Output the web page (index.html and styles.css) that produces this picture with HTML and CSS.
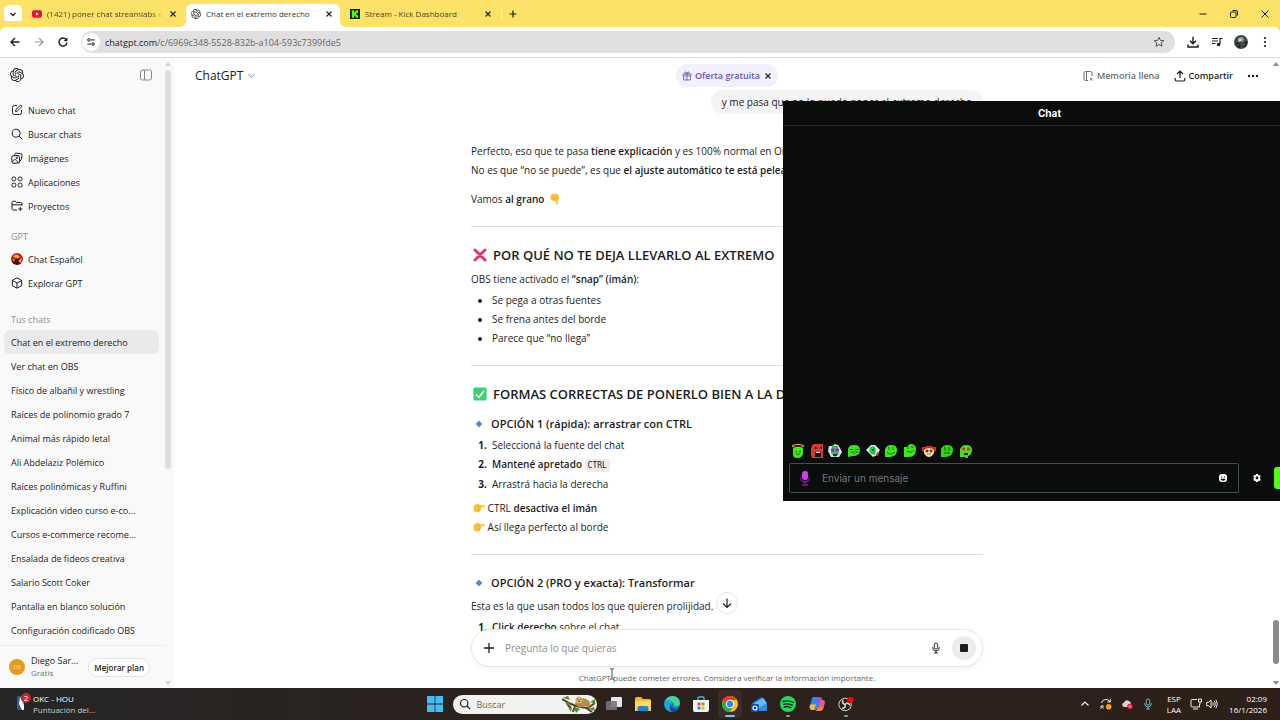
FILE: index.html
```html
<!DOCTYPE html>
<html lang="es">
<head>
  <meta charset="UTF-8">
  <meta name="viewport" content="width=device-width, initial-scale=1.0">
  <title>Chat en el extremo derecho</title>
  <link rel="stylesheet" href="styles.css">
</head>
<body>
  <svg class="defs" aria-hidden="true">
    <symbol id="openai" viewBox="0 0 24 24"><path fill="currentColor" d="M22.2819 9.8211a5.9847 5.9847 0 0 0-.5157-4.9108 6.0462 6.0462 0 0 0-6.5098-2.9A6.0651 6.0651 0 0 0 4.9807 4.1818a5.9847 5.9847 0 0 0-3.9977 2.9 6.0462 6.0462 0 0 0 .7427 7.0966 5.98 5.98 0 0 0 .511 4.9107 6.051 6.051 0 0 0 6.5146 2.9001A5.9847 5.9847 0 0 0 13.2599 24a6.0557 6.0557 0 0 0 5.7718-4.2058 5.9894 5.9894 0 0 0 3.9977-2.9001 6.0557 6.0557 0 0 0-.7475-7.0729zm-9.022 12.6081a4.4755 4.4755 0 0 1-2.8764-1.0408l.1419-.0804 4.7783-2.7582a.7948.7948 0 0 0 .3927-.6813v-6.7369l2.02 1.1686a.071.071 0 0 1 .038.052v5.5826a4.504 4.504 0 0 1-4.4945 4.4944zm-9.6607-4.1254a4.4708 4.4708 0 0 1-.5346-3.0137l.142.0852 4.783 2.7582a.7712.7712 0 0 0 .7806 0l5.8428-3.3685v2.3324a.0804.0804 0 0 1-.0332.0615L9.74 19.9502a4.4992 4.4992 0 0 1-6.1408-1.6464zM2.3408 7.8956a4.485 4.485 0 0 1 2.3655-1.9728V11.6a.7664.7664 0 0 0 .3879.6765l5.8144 3.3543-2.0201 1.1685a.0757.0757 0 0 1-.071 0l-4.8303-2.7865A4.504 4.504 0 0 1 2.3408 7.872zm16.5963 3.8558L13.1038 8.364 15.1192 7.2a.0757.0757 0 0 1 .071 0l4.8303 2.7913a4.4944 4.4944 0 0 1-.6765 8.1042v-5.6772a.79.79 0 0 0-.407-.667zm2.0107-3.0231l-.142-.0852-4.7735-2.7818a.7759.7759 0 0 0-.7854 0L9.409 9.2297V6.8974a.0662.0662 0 0 1 .0284-.0615l4.8303-2.7866a4.4992 4.4992 0 0 1 6.6802 4.66zM8.3065 12.863l-2.02-1.1638a.0804.0804 0 0 1-.038-.0567V6.0742a4.4992 4.4992 0 0 1 7.3757-3.4537l-.142.0805L8.704 5.459a.7948.7948 0 0 0-.3927.6813zm1.0976-2.3654l2.602-1.4998 2.6069 1.4998v2.9994l-2.5974 1.4997-2.6067-1.4997Z"/></symbol>
    <symbol id="close" viewBox="0 0 10 10"><path d="M2.5 2.5l5 5M7.5 2.5l-5 5" fill="none" stroke="currentColor" stroke-width="1.2"/></symbol>
    <symbol id="diamond" viewBox="0 0 14 14"><path d="M7 3.6L10.4 7 7 10.4 3.6 7z" fill="#4a8ad0" stroke="#4a8ad0" stroke-linejoin="round"/></symbol>
    <symbol id="hand" viewBox="0 0 14 14">
      <path d="M.8 4.400C2.300 2.600 5 1.600 7 2.600l.9 1.200h4.700c1.500 0 1.500 2.200 0 2.200H8.800c1.200.4 1.200 2.100 0 2.400.6.800.2 1.900-.8 1.900 0 1.200-.8 1.800-1.900 1.800-2.200.1-4.200-.4-5.300-1.600z" fill="#fbc23a"/>
      <path d="M5.500 6h3.300M5.800 8.400h3M5.800 10.300h2.200M4.500 3.800c1.500-.4 2.300.2 2.600 1" fill="none" stroke="#e59328" stroke-width=".6"/>
    </symbol>
    <symbol id="mic" viewBox="0 0 14 14"><rect x="5" y="1.200" width="4" height="7" rx="2" fill="none" stroke="currentColor" stroke-width="1.100"/><path d="M3 6.500a4 4 0 0 0 8 0M7 10.500v2.300M5.300 12.800h3.400" fill="none" stroke="currentColor" stroke-width="1.100" stroke-linecap="round"/></symbol>
  </svg>

  <div class="tab-strip">
    <button class="tab-search" aria-label="Buscar pestañas"><svg viewBox="0 0 10 10"><path d="M2.500 4L5 6.500 7.500 4" fill="none" stroke="currentColor" stroke-width="1.300"/></svg></button>
    <div class="tabs">
      <div class="tab">
        <svg class="favicon" viewBox="0 0 11 11"><rect y="1.500" width="11" height="8" rx="2" fill="#e8123c"/><path d="M4.300 3.700v3.600L7.400 5.500z" fill="#fff"/></svg>
        <span class="tab-title faded">(1421) poner chat streamlabs e</span>
        <button class="tab-close" aria-label="Cerrar"><svg><use href="#close"/></svg></button>
      </div>
      <div class="tab active">
        <svg class="favicon"><use href="#openai"/></svg>
        <span class="tab-title">Chat en el extremo derecho</span>
        <button class="tab-close" aria-label="Cerrar"><svg><use href="#close"/></svg></button>
      </div>
      <div class="tab">
        <svg class="favicon" viewBox="0 0 11 11"><path fill="#10210c" d="M0 0h11v11H0z"/><path fill="#53fc18" d="M2 1.500h2.500v2.200h1V2.600h1.200V1.500H9V4H7.800v1H6.700v1h1.100v1H9v2.500H6.700V8.400H5.500V7.300h-1v2.200H2z"/></svg>
        <span class="tab-title">Stream - Kick Dashboard</span>
        <button class="tab-close" aria-label="Cerrar"><svg><use href="#close"/></svg></button>
      </div>
    </div>
    <button class="new-tab" aria-label="Nueva pestaña"><svg viewBox="0 0 10 10"><path d="M5 1.500v7M1.500 5h7" stroke="currentColor" stroke-width="1.200"/></svg></button>
    <div class="window-controls">
      <button aria-label="Minimizar"><svg viewBox="0 0 10 10"><path d="M1.500 5h7" stroke="currentColor"/></svg></button>
      <button aria-label="Restaurar"><svg viewBox="0 0 10 10" fill="none" stroke="currentColor"><rect x="1.500" y="3" width="5.500" height="5.500" rx="1"/><path d="M3.500 1.500h3.500a1.500 1.500 0 0 1 1.500 1.500v3.500"/></svg></button>
      <button aria-label="Cerrar ventana"><svg viewBox="0 0 10 10"><path d="M1.500 1.500l7 7M8.500 1.500l-7 7" stroke="currentColor"/></svg></button>
    </div>
  </div>

  <div class="toolbar">
    <button aria-label="Atrás"><svg viewBox="0 0 12 12"><path d="M10.500 6H2M6 2L2 6l4 4" fill="none" stroke="currentColor" stroke-width="1.400"/></svg></button>
    <button class="disabled" aria-label="Adelante"><svg viewBox="0 0 12 12"><path d="M1.500 6H10M6 2l4 4-4 4" fill="none" stroke="currentColor" stroke-width="1.200"/></svg></button>
    <button aria-label="Recargar"><svg viewBox="0 0 12 12"><path d="M9.600 4.200A4 4 0 1 0 10 6.700" fill="none" stroke="currentColor" stroke-width="1.400"/><path d="M10.400 1.300v4H6.500z" fill="currentColor"/></svg></button>
    <div class="address-bar">
      <button class="site-info" aria-label="Información del sitio"><svg viewBox="0 0 12 12" fill="none" stroke="currentColor" stroke-width="1.200"><circle cx="3.500" cy="3.500" r="1.500"/><path d="M6 3.500h4.500M1.500 8.500H6"/><circle cx="8.500" cy="8.500" r="1.500"/></svg></button>
      <div class="url" role="textbox" contenteditable="true" spellcheck="false" aria-label="Dirección"><b>chatgpt.com</b>/c/6969c348-5528-832b-a104-593c7399fde5</div>
      <button class="star" aria-label="Favorito"><svg viewBox="0 0 12 12"><path d="M6 1.300l1.400 3.100 3.400.3-2.600 2.200.8 3.400L6 8.500l-3 1.800.8-3.400L1.200 4.700l3.400-.3z" fill="none" stroke="currentColor"/></svg></button>
    </div>
    <button aria-label="Descargas"><svg viewBox="0 0 12 12"><path d="M6 .8v6.700M3 4.700l3 3 3-3M1 8.500v2.500h10V8.500" fill="none" stroke="currentColor" stroke-width="1.400"/></svg></button>
    <button aria-label="Multimedia"><svg viewBox="0 0 12 12"><path d="M1 2.500h6M1 5h6M1 7.500h3.500M9 8V2.500h2.500" fill="none" stroke="currentColor" stroke-width="1.200"/><circle cx="7.600" cy="8.500" r="1.700" fill="currentColor"/></svg></button>
    <button class="profile" aria-label="Perfil"><svg viewBox="0 0 14 14"><circle cx="7" cy="7" r="7" fill="#45484a"/><path d="M4 3.500c2-2 5-1.500 6 .5l-1 3-3-1-2 2z" fill="#9da1a2"/><path d="M1 8l3-1 3 4-2 2.500zM9 8l4-2-1 5-3 1z" fill="#1c1e1f"/><path d="M3 9l2 1-1 1zM9 9l2-1-1 3z" fill="#8b8f90"/><circle cx="6" cy="5" r="1.200" fill="#d4d6d6"/></svg></button>
    <button aria-label="Menú"><svg viewBox="0 0 12 12" fill="currentColor"><circle cx="6" cy="2" r="1.100"/><circle cx="6" cy="6" r="1.100"/><circle cx="6" cy="10" r="1.100"/></svg></button>
  </div>

  <div class="page">
    <aside class="sidebar">
      <div class="sidebar-main">
        <div class="sidebar-header">
          <svg class="logo"><use href="#openai"/></svg>
          <button aria-label="Cerrar barra lateral"><svg viewBox="0 0 14 14" fill="none" stroke="currentColor"><rect x="1.500" y="2" width="11" height="10" rx="2"/><path d="M5.500 2v10"/></svg></button>
        </div>
        <nav class="nav">
          <a href="#"><svg viewBox="0 0 12 12"><path d="M6 1.500H3.500a2 2 0 0 0-2 2v5a2 2 0 0 0 2 2h5a2 2 0 0 0 2-2V6M4.500 7.600l.4-2L9 1.500c.9-.9 2.400.6 1.500 1.500L6.400 7.100z"/></svg>Nuevo chat</a>
          <a href="#"><svg viewBox="0 0 12 12"><circle cx="5.200" cy="5.200" r="4"/><path d="M8.200 8.200l3 3"/></svg>Buscar chats</a>
          <a href="#"><svg viewBox="0 0 12 12"><rect x=".8" y="3.500" width="7.700" height="7.700" rx="2" transform="rotate(-4 5 7)"/><path d="M3.500 3.300l.3-1a1.500 1.500 0 0 1 1.700-1.200l4 .6A1.500 1.500 0 0 1 11 3.500l-.7 4A1.500 1.500 0 0 1 9 8.700M1.500 9.500c2-3 4-2.500 5.500 1.300"/><circle cx="5.800" cy="5.800" r=".7"/></svg>Imágenes</a>
          <a href="#"><svg viewBox="0 0 12 12"><rect x="1" y="1" width="3.800" height="3.800" rx="1.400"/><rect x="7.200" y="1" width="3.800" height="3.800" rx="1.400"/><rect x="1" y="7.200" width="3.800" height="3.800" rx="1.400"/><rect x="7.200" y="7.200" width="3.800" height="3.800" rx="1.400"/></svg>Aplicaciones</a>
          <a href="#"><svg viewBox="0 0 12 12"><path d="M6 10H2.500A1.500 1.500 0 0 1 1 8.500v-6A1.300 1.300 0 0 1 2.300 1.200h1.900l1.300 1.300h4A1.500 1.500 0 0 1 11 4v1.500M1 4.800h10M9.300 7v4M7.300 9h4"/></svg>Proyectos</a>
        </nav>
        <h2 class="nav-label">GPT</h2>
        <nav class="nav">
          <a href="#"><svg viewBox="0 0 12 12" class="gpt-avatar"><circle cx="6" cy="6" r="6" fill="#b3261c"/><path d="M1 9c1-3 3-1 4-4s4-2 3 0 2 2 1 5-5 2-8-1z" fill="#3b1712"/><path d="M2 3.500c2-3 6-2 7 1L6 5.500zM7 8l4-3-1 5z" fill="#f2a531"/><path d="M2 7l2-1-1 3z" fill="#f2c43a"/></svg>Chat Español</a>
          <a href="#"><svg viewBox="0 0 12 12"><path d="M6 .8l4.700 2.600v5.200L6 11.200 1.300 8.600V3.400zM1.500 3.500L6 6l4.500-2.500M6 6v5"/></svg>Explorar GPT</a>
        </nav>
        <h2 class="nav-label chats-label">Tus chats</h2>
        <nav class="nav">
          <a class="selected" href="#">Chat en el extremo derecho</a>
          <a href="#">Ver chat en OBS</a>
          <a href="#">Físico de albañil y wrestling</a>
          <a href="#">Raíces de polinomio grado 7</a>
          <a href="#">Animal más rápido letal</a>
          <a href="#">Ali Abdelaziz Polémico</a>
          <a href="#">Raíces polinómicas y Ruffini</a>
          <a href="#">Explicación video curso e-co...</a>
          <a href="#">Cursos e-commerce recome...</a>
          <a href="#">Ensalada de fideos creativa</a>
          <a href="#">Salario Scott Coker</a>
          <a href="#">Pantalla en blanco solución</a>
          <a href="#">Configuración codificado OBS</a>
        </nav>
        <div class="account">
          <span class="initials">DS</span>
          <div class="account-name">Diego Sar...<small>Gratis</small></div>
          <button class="upgrade">Mejorar plan</button>
        </div>
      </div>
      <div class="scrollbar">
        <span class="arrow-up"></span>
        <span class="thumb"></span>
        <span class="arrow-down"></span>
      </div>
    </aside>

    <main class="conversation">
      <header class="top-bar">
        <button class="model">ChatGPT <svg viewBox="0 0 10 10"><path d="M1.500 3.500L5 7l3.500-3.500" fill="none" stroke="#777"/></svg></button>
        <div class="offer">
          <svg viewBox="0 0 12 12" fill="none" stroke="currentColor"><path d="M1.200 3.500h9.600v2.300H1.200zM2 5.800v5h8v-5M6 3.500v7.300M6 3.500C3 3.500 3 1 4.300 1S6 3.500 6 3.500zM6 3.500C9 3.500 9 1 7.700 1S6 3.500 6 3.500z"/></svg>
          <a href="#">Oferta gratuita</a>
          <button aria-label="Descartar"><svg><use href="#close"/></svg></button>
        </div>
        <div class="actions">
          <button class="memory"><svg viewBox="0 0 12 12" fill="none" stroke="currentColor"><path d="M10 6V3a1.500 1.500 0 0 0-1.500-1.500h-5A1.500 1.500 0 0 0 2 3v6a1.500 1.500 0 0 0 1.500 1.500H6M4.500 1.500v9M8 8l2.500 2.500M10.500 8L8 10.500"/></svg>Memoria llena</button>
          <button class="share"><svg viewBox="0 0 12 12" fill="none" stroke="currentColor" stroke-width="1.200"><path d="M6 8V1.200M3 4l3-3 3 3M1.200 8v1.500A1.500 1.500 0 0 0 2.700 11h6.600a1.500 1.500 0 0 0 1.500-1.500V8"/></svg>Compartir</button>
          <button aria-label="Más"><svg viewBox="0 0 12 12" fill="currentColor"><circle cx="2" cy="6" r="1.200"/><circle cx="6" cy="6" r="1.200"/><circle cx="10" cy="6" r="1.200"/></svg></button>
        </div>
      </header>

      <div class="thread">
        <div class="column">
          <div class="bubble">y me pasa que no lo puedo poner al extremo derecho</div>
          <p>Perfecto, eso que te pasa <strong>tiene explicación</strong> y es 100% normal en OBS.<br>
            No es que “no se puede”, es que <strong>el ajuste automático te está peleando</strong>.</p>
          <p>Vamos <strong>al grano</strong> <svg class="emoji down"><use href="#hand"/></svg></p>
          <hr>
          <h2><svg class="emoji" viewBox="0 0 14 14"><path d="M2 2l10 10M12 2L2 12" stroke="#e2386b" stroke-width="3" stroke-linecap="round"/></svg>POR QUÉ NO TE DEJA LLEVARLO AL EXTREMO</h2>
          <p>OBS tiene activado el <strong>“snap” (imán)</strong>:</p>
          <ul>
            <li>Se pega a otras fuentes</li>
            <li>Se frena antes del borde</li>
            <li>Parece que “no llega”</li>
          </ul>
          <hr>
          <h2><svg class="emoji" viewBox="0 0 14 14"><rect x=".4" y=".4" width="13.200" height="13.200" rx="1.500" fill="#3ecf74"/><path d="M3 7.500l2.800 2.800L11 4" fill="none" stroke="#fff" stroke-width="1.500"/></svg>FORMAS CORRECTAS DE PONERLO BIEN A LA DERECHA</h2>
          <h3><svg class="emoji"><use href="#diamond"/></svg>OPCIÓN 1 (rápida): arrastrar con CTRL</h3>
          <ol>
            <li>Seleccioná la fuente del chat</li>
            <li><strong>Mantené apretado</strong> <code>CTRL</code></li>
            <li>Arrastrá hacia la derecha</li>
          </ol>
          <p><svg class="emoji"><use href="#hand"/></svg> CTRL <strong>desactiva el imán</strong><br>
            <svg class="emoji"><use href="#hand"/></svg> Así llega perfecto al borde</p>
          <hr>
          <h3><svg class="emoji"><use href="#diamond"/></svg>OPCIÓN 2 (PRO y exacta): Transformar</h3>
          <p>Esta es la que usan todos los que quieren prolijidad.</p>
          <ol>
            <li><strong>Click derecho</strong> sobre el chat</li>
          </ol>
        </div>
      </div>

      <div class="composer-area">
        <button class="scroll-down" aria-label="Bajar"><svg viewBox="0 0 12 12"><path d="M6 1.500v9M2 6.500l4 4 4-4" fill="none" stroke="currentColor" stroke-width="1.200"/></svg></button>
        <form class="composer">
          <button type="button" aria-label="Adjuntar"><svg viewBox="0 0 12 12"><path d="M6 1v10M1 6h10" stroke="currentColor" stroke-width="1.300"/></svg></button>
          <input type="text" placeholder="Pregunta lo que quieras" aria-label="Mensaje">
          <button type="button" aria-label="Dictar"><svg><use href="#mic"/></svg></button>
          <button type="button" class="stop" aria-label="Detener"><svg viewBox="0 0 12 12"><rect x="2" y="2" width="8" height="8" rx="1" fill="currentColor"/></svg></button>
        </form>
        <p class="disclaimer">ChatGPT puede cometer errores. Considera verificar la información importante.
          <svg class="ibeam" viewBox="0 0 6 12"><path d="M1 .8h1.500L3 1.300l.5-.5H5M3 1.300v9.400M1 11.200h1.500l.5-.5.5.5H5" fill="none" stroke="#222" stroke-width=".8"/></svg></p>
      </div>

      <div class="scrollbar page-scroll">
        <span class="arrow-up"></span>
        <span class="thumb"></span>
        <span class="arrow-down"></span>
      </div>
    </main>
  </div>

  <section class="kick-chat">
    <h2>Chat</h2>
    <div class="kick-messages"></div>
    <div class="emotes">
      <svg viewBox="0 0 14 14"><path d="M2 4h10v6q-1 4-6 4-4 0-4-4z" fill="#45e61c"/><ellipse cx="7" cy="2" rx="6" ry="1.400" fill="none" stroke="#f3cc68"/><path d="M4 8h2M8 7.500h2M5 10q2 1 4-.5" fill="none" stroke="#15700a"/></svg>
      <svg viewBox="0 0 14 14"><path d="M3 0h9q1 0 1 1v13H2l-1-3V4z" fill="#d63a38"/><path d="M5 8h6v5H5zM5 3l3 1-3 1zM9 4l3-1v2z" fill="#17100f"/><path d="M6 8h4v1H6z" fill="#fff"/></svg>
      <svg viewBox="0 0 14 14"><path d="M0 7l1-5h3l3-2 3 1 2 3 2 4-3 5H3z" fill="#e3e0e8"/><path d="M4 2h6v4l1 4-4 3-4-4z" fill="#2fbd55"/><circle cx="4.500" cy="6" r="1.700" fill="#8d25bd"/><circle cx="9.500" cy="6" r="1.700" fill="#8d25bd"/><path d="M5 10h4v2H5z" fill="#40203c"/></svg>
      <svg viewBox="0 0 14 14"><path d="M1 13V5q1-4 6-4 6 0 6 5 0 6-7 6z" fill="#3fe022"/><path d="M3 5.500h3M8 5.500h4M4 8h7q-3 3-7 0z" fill="#c9f4ba" stroke="#15700a" stroke-width=".8"/></svg>
      <svg viewBox="0 0 14 14"><path d="M0 6l5-5h4l5 5-3 5-4 2z" fill="#e6f1e8"/><path d="M4 3l4-1 2 3-1 6-4-1-2-3z" fill="#23ca4a"/><circle cx="7" cy="6" r="1" fill="#123"/><path d="M11 8l2 1-1 3-2-1z" fill="#d22c68"/></svg>
      <svg viewBox="0 0 14 14"><path d="M1 13V5q2-4 6-4 6 0 6 5 0 6-7 7z" fill="#42e51d"/><path d="M5 3v3M9 3v3M3 8q4 4 8 0" fill="none" stroke="#15700a"/></svg>
      <svg viewBox="0 0 14 14"><path d="M1 13V3l3 0 3-3q6 0 6 5 0 8-7 8z" fill="#42e51d"/><path d="M4 4h2M8 3h3M4 7q4 3 7-1" fill="none" stroke="#15700a"/></svg>
      <svg viewBox="0 0 14 14"><path d="M0 3h3l1-1h6l1 1h3v4l-2 1H2L0 7z" fill="#bb352a"/><path d="M2 6q5-4 10 0v3q-2 4-5 4t-5-4z" fill="#e9e1b2"/><path d="M4 6h2v2H4zM8 6h2v2H8zM5 10h4" fill="#9f211a" stroke="#9f211a" stroke-width=".6"/></svg>
      <svg viewBox="0 0 14 14"><path d="M1 13V5q2-4 6-4 6 0 6 5 0 6-7 7z" fill="#32d61b"/><path d="M5 3v4M9 3v4M4 9h6" fill="none" stroke="#14580a"/></svg>
      <svg viewBox="0 0 14 14"><path d="M1 13V5q2-4 6-4 6 0 6 5 0 6-7 7z" fill="#49df1d"/><circle cx="4.500" cy="5" r="1.700" fill="#c4402a"/><circle cx="9.500" cy="5" r="1.700" fill="#c4402a"/><path d="M5 9h4v2H5z" fill="#3a2a20"/><path d="M6 11h3v3H6z" fill="#38b8d8"/></svg>
    </div>
    <div class="kick-send">
      <div class="kick-input">
        <svg viewBox="0 0 12 16"><rect x="3" y="1" width="6" height="9" rx="3" fill="#d13df0"/><path d="M1.500 7.500a4.500 4.500 0 0 0 9 0M6 12v3M3 15h6" fill="none" stroke="#8214a0" stroke-width="1.400"/></svg>
        <input type="text" placeholder="Enviar un mensaje" aria-label="Enviar un mensaje">
        <button aria-label="Emotes"><svg viewBox="0 0 10 10"><rect x="1" y="1" width="8" height="8" rx="3" fill="#fff"/><path d="M3 3.500h1.200v1H3zM5.800 3.500H7v1H5.800zM2.500 5.700h5q-.5 2-2.500 2t-2.500-2z" fill="#0b0c0c"/></svg></button>
      </div>
      <button class="gear" aria-label="Ajustes"><svg viewBox="0 0 10 10"><path d="M4 1h2l.4 1.200 1.300-.3 1 1.700L7.900 5l.8 1.400-1 1.700-1.300-.3L6 9H4l-.4-1.200-1.300.3-1-1.700L2.100 5l-.8-1.400 1-1.700 1.300.3z" fill="#fff"/><circle cx="5" cy="5" r="1.400" fill="#0b0c0c"/></svg></button>
      <button class="send" aria-label="Chatear"></button>
    </div>
  </section>

  <footer class="taskbar">
    <div class="widget">
      <svg viewBox="0 0 16 18"><rect x="1" y="3" width="7" height="14" rx="1.500" fill="#315a9c"/><path d="M4 4l2 4 2 2v7H6L3 11z" fill="#fff"/><path d="M6 4h2v9z" fill="#c63243"/><circle cx="10" cy="5" r="5" fill="#c9252d"/><text x="10" y="8" text-anchor="middle" font-size="8" fill="#fff">2</text></svg>
      <div>OKC - HOU<span>Puntuación del...</span></div>
    </div>
    <div class="apps">
      <button aria-label="Inicio"><svg viewBox="0 0 16 16" fill="#46bdf3"><path d="M0 0h7.600v7.600H0zM8.400 0H16v7.600H8.400zM0 8.400h7.600V16H0zM8.400 8.400H16V16H8.400z"/></svg></button>
      <div class="search">
        <svg class="search-icon" viewBox="0 0 12 12"><circle cx="5.200" cy="5.200" r="3.700" fill="none" stroke="#222" stroke-width="1.200"/><path d="M8 8l3 3" stroke="#222" stroke-width="1.200"/></svg>
        <input type="search" placeholder="Buscar" aria-label="Buscar">
        <svg class="sloth" viewBox="0 0 34 18"><path d="M0 4l9 5 8 3 9 1 7-5M5 9l4 4M24 13l6 4M13 11l-2 6" fill="none" stroke="#594321" stroke-width="2"/><path d="M1 3l5-2 2 4zM3 8l5-1-1 4zM12 12l6 2-4 4zM26 14l6-2 1 4zM28 7l5-3 0 5zM6 12l4 1-1 4z" fill="#548b38"/><path d="M13 9q1-6 8-6l5 2q4 4 1 8l-3-2-7 2z" fill="#b08b4b"/><circle cx="17" cy="5" r="3.500" fill="#d4b478"/><path d="M15 4l1.500.7M18 4.500l1 .5M16 6.500h2" stroke="#49321a" stroke-width=".8"/></svg>
      </div>
      <button aria-label="Vista de tareas"><svg viewBox="0 0 16 16"><rect x="5" y="1" width="11" height="10" rx="1" fill="#e6e6e6"/><rect x="0" y="5" width="11" height="9" rx="1" fill="#777" opacity=".9"/></svg></button>
      <button aria-label="Explorador"><svg viewBox="0 0 16 16"><path d="M0 2.500Q0 1 1.500 1H6l2 2h6.500Q16 3 16 4.500V15H0z" fill="#f4b92b"/><path d="M0 5h16v9q0 1-1 1H1q-1 0-1-1z" fill="#fdd663"/><path d="M2.500 15v-3q0-2 2-2h7q2 0 2 2v3z" fill="#2383c9"/></svg></button>
      <button aria-label="Edge"><svg viewBox="0 0 16 16"><circle cx="8" cy="8" r="8" fill="#1579cb"/><path d="M1 5q3-5 8-5 7 1 7 7 0 3-4 3.500-3 0-2-2Q9 4 1 5z" fill="#45d68b"/><path d="M1 5q6-2 8 2l-2 2q0 5 7 4-6 5-11 1Q-1 11 1 5z" fill="#1aa9dd"/><path d="M7 7q-2 6 7 6-3 3-6 3Q4 13 7 7z" fill="#124a96"/></svg></button>
      <button aria-label="Store"><svg viewBox="0 0 16 16"><path d="M5 4V2q0-1 1-1h4q1 0 1 1v2" fill="none" stroke="#49b3ee" stroke-width="1.300"/><path d="M0 4h16v10q0 2-2 2H2q-2 0-2-2z" fill="#f2f3f4"/><path d="M4.500 6.500h3v3h-3z" fill="#ed4b2f"/><path d="M8.500 6.500h3v3h-3z" fill="#6cb42c"/><path d="M4.500 10.500h3v3h-3z" fill="#1c9ce0"/><path d="M8.500 10.500h3v3h-3z" fill="#f7b513"/></svg></button>
      <button class="current" aria-label="Chrome"><svg viewBox="0 0 16 16"><circle cx="8" cy="8" r="8" fill="#fbc116"/><path d="M1.070 4A8 8 0 0 1 14.930 4H8L4.540 10z" fill="#e33b2e"/><path d="M1.070 4A8 8 0 0 0 8 16l3.460-6H4.540z" fill="#2da94f"/><circle cx="8" cy="8" r="4.200" fill="#fff"/><circle cx="8" cy="8" r="3.200" fill="#3f82ed"/></svg></button>
      <button aria-label="Outlook"><svg viewBox="0 0 16 16"><path d="M1 7l9-6q4 1 5 5v8q0 1-1 1H2q-1 0-1-1z" fill="#1667c8"/><path d="M3 7l9-5 4 5-7 6z" fill="#63bdf5"/><path d="M8 12l8-5v7q0 1-1 1H8z" fill="#2f8ce9"/><rect y="8" width="8" height="8" rx="1.500" fill="#0f50ac"/><circle cx="4" cy="12" r="2" fill="none" stroke="#fff" stroke-width="1.200"/></svg></button>
      <button class="open" aria-label="Spotify"><svg viewBox="0 0 16 16"><circle cx="8" cy="8" r="8" fill="#1ed760"/><path d="M3 5.500q5.500-1.500 10.500 1M3.700 8.300q4.500-1.200 8.500.9M4.300 11q3.500-.9 6.700.7" fill="none" stroke="#10210f" stroke-width="1.300" stroke-linecap="round"/></svg></button>
      <button aria-label="Copilot"><svg viewBox="0 0 16 16"><path d="M4 1h6q2 0 1.500 2L9 12q-.7 2-3 2H3q-3 0-2-4l1.500-6Q3 1 4 1z" fill="#2a8ee8"/><path d="M1 8.500h6L5 14H3.500q-4 0-2.500-5.500z" fill="#f3bd35"/><path d="M12 2q1 0 1.300 2H14q2.500 0 1.800 3.500L14.500 12q-.8 3-4 3H6q2 0 3-3l1.500-6Q11 4 12 2z" fill="#e75b8e"/><path d="M8 1h2.500q2 0 2.500 3h-1.500Q10 4 9.500 6L9 7.500 7 7z" fill="#7b5be8"/><path d="M9 11.500h5.600q-1 3.500-4.100 3.500H6q2 0 3-3.500z" fill="#f48b45"/></svg></button>
      <button class="open" aria-label="OBS"><svg viewBox="0 0 18 16"><circle cx="8" cy="8.500" r="7" fill="#24201f" stroke="#ddd" stroke-width="1.100"/><path d="M8 8.500q-4-1-2.500-5M8 8.500q3-3 5.500 1M8 8.500q1 4-3.500 4.500" fill="none" stroke="#ddd" stroke-width="1.800"/><circle cx="14" cy="3.500" r="3.500" fill="#f00b12"/></svg></button>
    </div>
    <div class="tray">
      <svg viewBox="0 0 12 12"><path d="M2.500 7.500L6 4l3.500 3.500" fill="none" stroke="#eee" stroke-width="1.200"/></svg>
      <svg viewBox="0 0 12 12"><path d="M1.500 5A4.500 4.500 0 0 1 10 4M10.300 1v3H7.500M1.500 8l2 2.500M1 10.800V8h2.800" fill="none" stroke="#eee"/><circle cx="8.700" cy="8.700" r="2.800" fill="#f2a21b"/></svg>
      <svg viewBox="0 0 12 12"><path d="M3 9a2.300 2.300 0 0 1 0-4.500Q5 1 8 3q2 1 2 3l-4 3z" fill="#d8d5d3"/><circle cx="9" cy="8.500" r="2.700" fill="#d81b4a"/><path d="M8 7.500l2 2M10 7.500l-2 2" stroke="#fff" stroke-width=".7"/></svg>
      <svg class="tray-mic"><use href="#mic"/></svg>
      <div class="lang">ESP<br>LAA</div>
      <div class="status">
        <svg viewBox="0 0 12 12" fill="none" stroke="#eee"><path d="M7 1.500H2a1 1 0 0 0-1 1v5.500a1 1 0 0 0 1 1h7.500V6M3 11h5M8.500 1h3v3h-3zM10 4v2.500"/></svg>
        <svg viewBox="0 0 12 12" fill="none" stroke="#eee"><path d="M.7 4.300h1.800L5 2v8L2.500 7.700H.7zM6.700 4.300q1.200 1.700 0 3.400M8.300 3q2.200 3 0 6M9.900 1.800q3 4.200 0 8.400"/></svg>
      </div>
      <div class="clock">02:09<br>16/1/2026</div>
    </div>
  </footer>
</body>
</html>
```

FILE: styles.css
```css
* {
  box-sizing: border-box;
}

body {
  margin: 0;
  height: 100vh;
  display: flex;
  flex-direction: column;
  overflow: hidden;
  font-family: "Open Sans", "Noto Sans", sans-serif;
  font-size: 10px;
  color: #1c1c1c;
  background-color: #ffffff;
}

button {
  display: flex;
  align-items: center;
  justify-content: center;
  padding: 0;
  border: none;
  background: none;
  color: inherit;
  font: inherit;
  cursor: pointer;
}

input {
  flex: 1;
  min-width: 0;
  padding: 0;
  border: none;
  outline: none;
  background: none;
  font: inherit;
}

a {
  color: inherit;
  text-decoration: none;
}

svg {
  flex: none;
  width: 12px;
  height: 12px;
}

.defs {
  display: none;
}

/* browser */
.tab-strip {
  display: flex;
  align-items: center;
  height: 27px;
  padding-left: 4px;
  background-color: #fde269;
  font-size: 8px;
}

.tab-strip svg {
  width: 10px;
  height: 10px;
}

.tab-search {
  width: 18px;
  height: 18px;
  border-radius: 5px;
  background-color: #ffffff;
}

.tabs {
  display: flex;
  align-self: flex-end;
  gap: 5px;
  margin-left: 5px;
}

.tab {
  position: relative;
  display: flex;
  align-items: center;
  gap: 5px;
  width: 154px;
  height: 23px;
  padding: 0 6px 4px 5px;
  color: #4c451f;
}

.tab.active {
  border-radius: 6px 6px 0 0;
  background-color: #ffffff;
  color: #333333;
}

.tab.active::before,
.tab.active::after {
  content: "";
  position: absolute;
  bottom: 0;
  width: 6px;
  height: 6px;
}

.tab.active::before {
  left: -6px;
  background: radial-gradient(circle at 0 0, #fde269 6px, #ffffff 6px);
}

.tab.active::after {
  right: -6px;
  background: radial-gradient(circle at 100% 0, #fde269 6px, #ffffff 6px);
}

.tab-title {
  flex: 1;
  white-space: nowrap;
}

.tab-title.faded {
  -webkit-mask-image: linear-gradient(to right, #000 90%, transparent);
  mask-image: linear-gradient(to right, #000 90%, transparent);
}

.tab-close {
  color: #222222;
}

.new-tab {
  margin-left: 2px;
  padding-left: 6px;
  border-left: 1px solid #fff3b8;
}

.window-controls {
  display: flex;
  gap: 21px;
  margin-left: auto;
  padding-right: 10px;
}

.toolbar {
  display: flex;
  align-items: center;
  gap: 12px;
  height: 31px;
  padding: 0 9px;
  border-bottom: 1px solid #dcdcdc;
  box-shadow: 0 -6px 0 #fde269;
  border-radius: 6px 6px 0 0;
  background-color: #ffffff;
}

.toolbar .disabled {
  color: #999999;
}

.toolbar .profile {
  margin: 0 -1px;
}

.toolbar .profile svg {
  width: 14px;
  height: 14px;
}

.address-bar {
  flex: 1;
  display: flex;
  align-items: center;
  gap: 5px;
  height: 22px;
  padding: 0 10px 0 1px;
  border-radius: 11px;
  background-color: #e0e0e0;
}

.site-info {
  width: 18px;
  height: 18px;
  border-radius: 50%;
  background-color: #ffffff;
}

.site-info svg {
  width: 10px;
  height: 10px;
}

.url {
  flex: 1;
  color: #666666;
  font-size: 9px;
}

.url b {
  color: #222222;
  font-weight: 400;
}

.star {
  color: #555555;
}

/* page */
.page {
  flex: 1;
  display: flex;
  min-height: 0;
}

.sidebar {
  display: flex;
  width: 174px;
  background-color: #f9f9f9;
  font-size: 9px;
}

.sidebar-main {
  flex: 1;
  display: flex;
  flex-direction: column;
}

.sidebar-header {
  display: flex;
  justify-content: space-between;
  height: 40px;
  padding: 10px 12px 0 10px;
}

.sidebar-header svg {
  width: 14px;
  height: 14px;
}

.sidebar-header button {
  align-self: flex-start;
  color: #888888;
}

.nav {
  padding: 0 6px 0 4px;
}

.nav a {
  display: flex;
  align-items: center;
  gap: 5px;
  height: 24px;
  padding-left: 7px;
  border-radius: 6px;
  white-space: nowrap;
}

.nav svg {
  fill: none;
  stroke: currentColor;
}

.nav .gpt-avatar {
  stroke: none;
}

.nav .selected {
  background-color: #eaeaea;
}

.nav-label {
  margin: 9px 0 0;
  padding-left: 11px;
  color: #8f8f8f;
  font-size: 9px;
  font-weight: 400;
  line-height: 20px;
}

.chats-label {
  margin-top: 15px;
}

.account {
  display: flex;
  align-items: center;
  margin-top: auto;
  height: 43px;
  padding: 0 15px 0 9px;
  border-top: 1px solid #ececec;
}

.initials {
  width: 16px;
  height: 16px;
  border-radius: 50%;
  background-color: #e89a1c;
  color: #fbe3b8;
  font-size: 6px;
  line-height: 16px;
  text-align: center;
}

.account-name {
  margin-left: 6px;
  line-height: 12px;
}

.account-name small {
  display: block;
  color: #6f6f6f;
  font-size: 8px;
}

.upgrade {
  height: 19px;
  margin-left: auto;
  padding: 0 5px;
  border: 1px solid #e3e3e3;
  border-radius: 10px;
  background-color: #ffffff;
  font-size: 8px;
  font-weight: 600;
}

.scrollbar {
  display: flex;
  flex-direction: column;
  align-items: center;
  width: 9px;
  padding: 4px 3px 3px 0;
}

.arrow-up,
.arrow-down {
  border: 3px solid transparent;
}

.arrow-up {
  border-top: none;
  border-bottom: 4px solid #d2d2d2;
}

.arrow-down {
  margin-top: auto;
  border-bottom: none;
  border-top: 4px solid #d2d2d2;
}

.thumb {
  width: 6px;
  height: 64%;
  margin-top: 4px;
  border-radius: 3px;
  background-color: #dedede;
}

.conversation {
  position: relative;
  flex: 1;
  display: flex;
  flex-direction: column;
  min-width: 0;
}

/* page scrollbar floats over the right edge */
.page-scroll {
  position: absolute;
  top: 0;
  right: 0;
  bottom: 0;
  padding-right: 0;
}

.page-scroll .arrow-up {
  border-bottom-color: #8a8a8a;
}

.page-scroll .arrow-down {
  margin-top: 17px;
  border-top-color: #8a8a8a;
}

.page-scroll .thumb {
  height: 44px;
  margin-top: auto;
  background-color: #8a8a8a;
}

.top-bar {
  display: grid;
  grid-template-columns: 1fr auto 1fr;
  align-items: center;
  height: 32px;
  padding: 3px 21px 0;
}

.model {
  justify-self: start;
  gap: 4px;
  font-size: 12px;
}

.model svg {
  width: 9px;
  height: 9px;
}

.offer {
  display: flex;
  align-items: center;
  gap: 3px;
  height: 23px;
  padding: 0 5px 0 6px;
  border-radius: 12px;
  background-color: #f2f0fd;
  color: #6b56b8;
  font-size: 9px;
  font-weight: 600;
}

.offer svg {
  width: 10px;
  height: 10px;
}

.offer button {
  color: #222222;
}

.actions {
  display: flex;
  justify-self: end;
  gap: 14px;
  font-size: 9px;
  font-weight: 600;
}

.actions button {
  gap: 3px;
}

.memory {
  color: #6c6c6c;
}

/* runs a little under the rounded composer */
.thread {
  flex: 1;
  min-height: 0;
  margin-bottom: -6px;
  overflow: hidden;
}

.column,
.composer-area {
  width: 512px;
  margin: 0 auto;
}

.column {
  display: flow-root;
  line-height: 19px;
}

.bubble {
  width: fit-content;
  height: 24px;
  margin: 0 0 28px auto;
  padding: 0 11px;
  border-radius: 12px;
  background-color: #f4f4f4;
  line-height: 24px;
}

.column p {
  margin: 0 0 2px;
}

.column p + p {
  margin-top: 10px;
}

.column strong {
  font-weight: 600;
}

.column hr {
  height: 1px;
  margin: 17px 0 18px;
  border: none;
  background-color: #dddddd;
}

.column h2 {
  margin: 0 0 5px;
  font-size: 13px;
  font-weight: 600;
  line-height: 20px;
}

.column h3 {
  margin: 0 0 3px;
  font-size: 11px;
  font-weight: 600;
  line-height: 19px;
}

.column h2 + h3 {
  margin-top: 10px;
}

.column h3 + p {
  margin-top: 5px;
}

.emoji {
  width: 12px;
  height: 12px;
  margin-left: 2px;
  vertical-align: -2px;
}

.column h2 .emoji {
  width: 14px;
  height: 14px;
  margin-right: 6px;
}

.column h3 .emoji {
  margin-right: 6px;
}

.emoji.down {
  transform: rotate(90deg);
}

.column ul,
.column ol {
  margin: 0 0 5px;
  padding-left: 21px;
}

.column ol li::marker {
  content: counter(list-item) ".\00a0\00a0";
  font-weight: 700;
}

code {
  padding: 2px 3px;
  border-radius: 3px;
  background-color: #ececec;
  font-family: "DejaVu Sans Mono", monospace;
  font-size: 8px;
}

.composer-area {
  position: relative;
  height: 59px;
}

.composer {
  display: flex;
  align-items: center;
  gap: 10px;
  height: 38px;
  padding: 0 6px 0 11px;
  border: 1px solid #e6e6e6;
  border-radius: 19px;
  background-color: #ffffff;
  box-shadow: 0 2px 4px rgba(0, 0, 0, 0.05);
}

.composer input::placeholder {
  color: #8f8f8f;
}

.stop {
  width: 24px;
  height: 24px;
  border-radius: 50%;
  background-color: #ebebeb;
}

.scroll-down {
  position: absolute;
  top: -37px;
  left: calc(50% - 11px);
  width: 22px;
  height: 22px;
  border: 1px solid #e6e6e6;
  border-radius: 50%;
  background-color: #ffffff;
}

.disclaimer {
  position: relative;
  margin: 4px 0 0;
  color: #666666;
  font-size: 8px;
  line-height: 14px;
  text-align: center;
}

.ibeam {
  position: absolute;
  top: -3px;
  left: 138px;
  width: 6px;
}

/* chat window on top of the page */
.kick-chat {
  position: absolute;
  top: 101px;
  right: 0;
  display: flex;
  flex-direction: column;
  width: 497px;
  height: 400px;
  background-color: #0b0c0c;
  color: #ffffff;
  font-family: Inter, sans-serif;
}

.kick-chat h2 {
  margin: 0;
  padding-left: 36px;
  border-bottom: 1px solid #26292b;
  font-size: 10px;
  line-height: 24px;
  text-align: center;
}

.kick-messages {
  flex: 1;
}

.emotes {
  display: flex;
  justify-content: space-between;
  width: 182px;
  margin: 0 0 5px 8px;
}

.emotes svg {
  width: 14px;
  height: 14px;
}

.kick-send {
  display: flex;
  align-items: center;
  padding: 0 0 8px 6px;
}

.kick-input {
  flex: 1;
  display: flex;
  align-items: center;
  gap: 11px;
  height: 30px;
  padding: 0 10px 0 9px;
  border: 1px solid #4a4d4f;
  border-radius: 2px;
}

.kick-input svg {
  height: 16px;
}

.kick-input button svg {
  width: 10px;
  height: 10px;
}

.kick-input input {
  color: #ffffff;
}

.kick-input input::placeholder {
  color: #747779;
}

.gear {
  width: 35px;
}

.gear svg {
  width: 10px;
  height: 10px;
}

.send {
  width: 6px;
  height: 22px;
  border-radius: 3px 0 0 3px;
  background-color: #53fc18;
}

/* taskbar */
.taskbar {
  display: flex;
  align-items: center;
  height: 32px;
  background: linear-gradient(to right, #262626, #2c211d 45%, #2c2019);
  color: #ffffff;
  font-size: 8px;
  line-height: 11px;
}

.widget {
  flex: 1;
  display: flex;
  gap: 1px;
  padding-left: 16px;
}

.widget svg {
  width: 16px;
  height: 18px;
}

.widget span {
  display: block;
  color: #cccccc;
}

.apps {
  display: flex;
  align-items: center;
  height: 100%;
  padding-right: 8px;
}

.apps button {
  position: relative;
  width: 24px;
  height: 28px;
  margin-left: 5px;
}

.apps button svg {
  width: 16px;
  height: 16px;
}

.apps .current {
  border-radius: 3px;
  background-color: #3a2c27;
}

.apps .open::after,
.apps .current::after {
  content: "";
  position: absolute;
  bottom: 1px;
  left: 10px;
  width: 4px;
  height: 2px;
  border-radius: 1px;
  background-color: #9c9492;
}

.apps .current::after {
  left: 7px;
  width: 10px;
  background-color: #78c6f0;
}

.search {
  display: flex;
  align-items: center;
  gap: 6px;
  width: 144px;
  height: 19px;
  margin-left: 6px;
  padding: 0 1px 0 6px;
  border-radius: 10px;
  background-color: #f4f2f1;
  font-size: 9px;
}

.search input::placeholder {
  color: #666666;
}

.search .sloth {
  width: 34px;
  height: 18px;
}

.tray {
  flex: 1;
  display: flex;
  align-items: center;
  justify-content: flex-end;
  gap: 9px;
  padding-right: 13px;
}

.tray-mic {
  color: #79bfc4;
}

.lang {
  margin-left: 4px;
  text-align: center;
}

.status {
  display: flex;
  gap: 4px;
}

.clock {
  margin-left: 2px;
  text-align: right;
}
```
